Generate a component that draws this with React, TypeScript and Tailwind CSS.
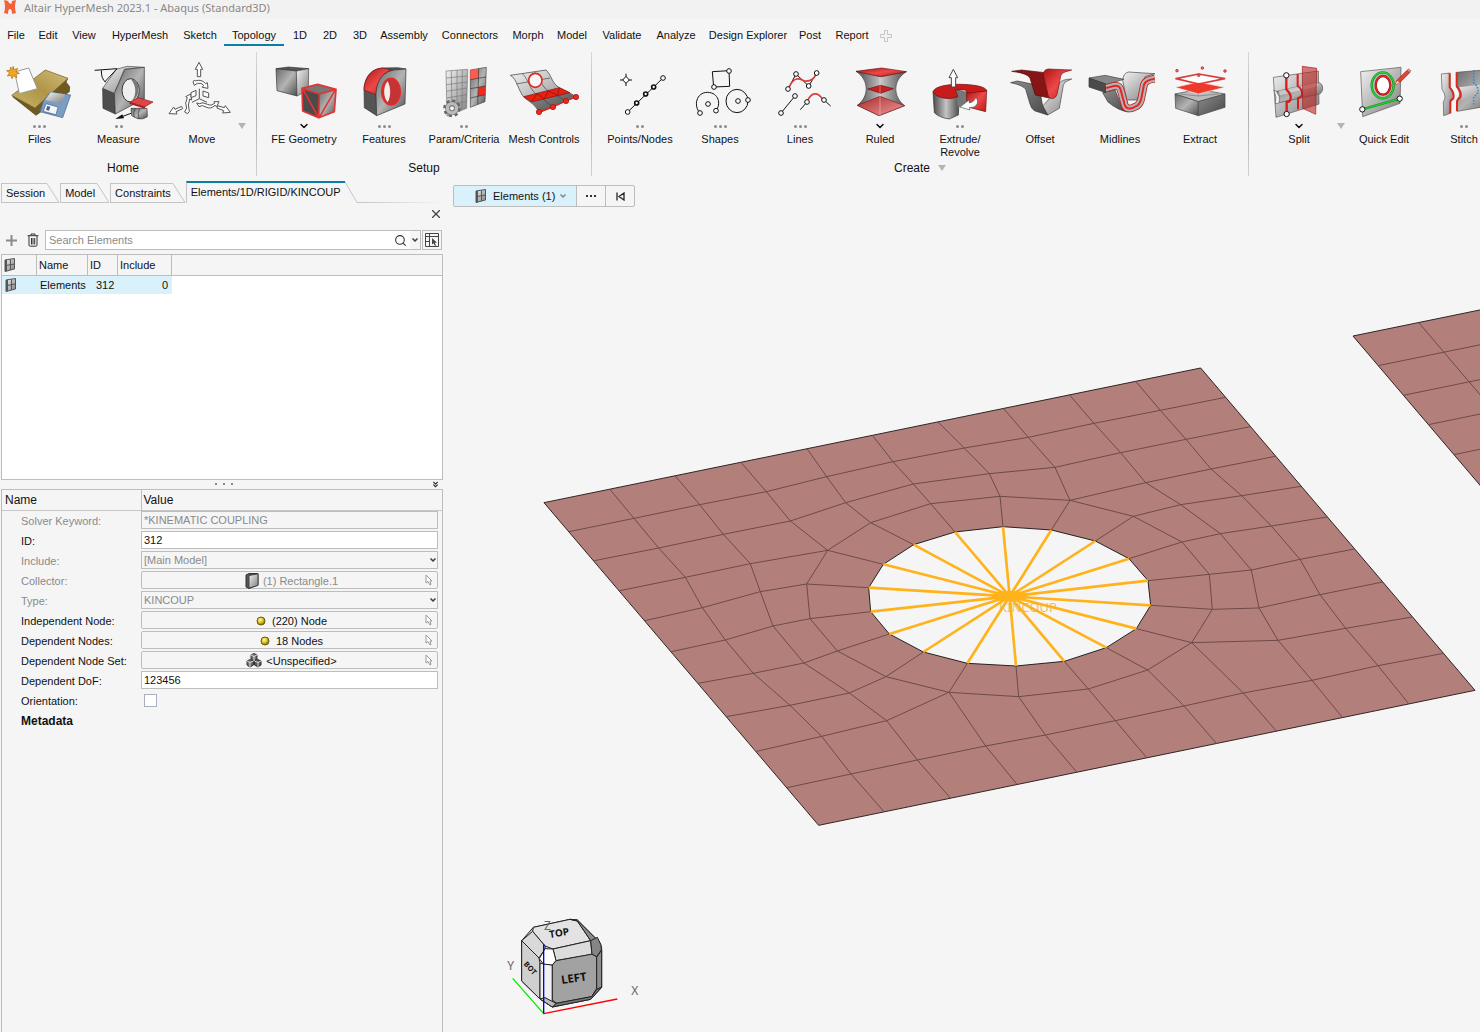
import type { ReactNode } from "react"
import clsx from "clsx"
import { ChevronDown, ChevronsDown, Search, X } from "lucide-react"

type Indicator = "none" | "two" | "three" | "chevron"

type Tool = {
  label: string
  indicator: Indicator
  viewBox: string
  icon: ReactNode
}

const menuItems = [
  { label: "File", width: "w-8" },
  { label: "Edit", width: "w-8" },
  { label: "View", width: "w-10" },
  { label: "HyperMesh", width: "w-18" },
  { label: "Sketch", width: "w-12" },
  { label: "Topology", width: "w-15" },
  { label: "1D", width: "w-8" },
  { label: "2D", width: "w-7" },
  { label: "3D", width: "w-8" },
  { label: "Assembly", width: "w-14" },
  { label: "Connectors", width: "w-19" },
  { label: "Morph", width: "w-10" },
  { label: "Model", width: "w-12" },
  { label: "Validate", width: "w-13" },
  { label: "Analyze", width: "w-14" },
  { label: "Design Explorer", width: "w-22" },
  { label: "Post", width: "w-9" },
  { label: "Report", width: "w-12" },
]

/* ---------- ribbon icons ---------- */

const nodeProps = { r: 7, fill: "#fff", stroke: "#111", strokeWidth: 3 }

function FilesIcon() {
  return (
    <g strokeLinejoin="round">
      <polygon points="133,212 201,236 196,246 207,260 206,275 106,346 36,290" fill="#6e5a22" stroke="#4d3f18" strokeWidth="2" />
      <polygon points="33,286 134,210 202,235 103,324" fill="url(#tan)" stroke="#7a6527" strokeWidth="2" />
      <polygon points="128,303 150,276 210,285 186,353 118,335" fill="#7b9cc4" stroke="#45628a" strokeWidth="2" />
      <polygon points="150,277 194,283 180,310 134,300" fill="url(#metalLight)" />
      <polygon points="136,311 172,321 166,344 128,334" fill="#f4f6fa" stroke="#45628a" strokeWidth="2" />
      <polygon points="140,318 149,320 145,332 136,330" fill="#45628a" />
      <polygon points="42,216 84,204 110,266 56,281" fill="#fff" stroke="#999" strokeWidth="3" />
      <path d="M37,199 L41,209 L51,205 L46,215 L56,220 L46,223 L49,233 L39,227 L34,236 L31,226 L20,228 L27,219 L18,212 L29,211 L29,201 L36,208Z" fill="#f5a623" stroke="#a86a00" strokeWidth="2" />
    </g>
  )
}

function MeasureIcon() {
  return (
    <g strokeLinejoin="round">
      <polygon points="307,265 342,280 345,342 308,325" fill="#4e4e4e" stroke="#333" strokeWidth="2" />
      <polygon points="307,265 348,208 380,199 432,202 372,208 342,280" fill="url(#metalLight)" stroke="#444" strokeWidth="2" />
      <polygon points="342,280 374,208 432,202 432,296 345,342" fill="url(#metal)" stroke="#333" strokeWidth="2" />
      <ellipse cx="391" cy="271" rx="26" ry="35" fill="#eee" stroke="#333" strokeWidth="3" />
      <path d="M391,237 C420,240 424,290 394,304 C410,285 408,255 391,237Z" fill="#777" />
      <path d="M283,211 L350,206 L313,246 M303,211 C303,228 306,238 316,247" fill="none" stroke="#111" strokeWidth="3" />
      <path d="M392,325 L440,325 L441,350 Q428,360 412,356 L394,347Z" fill="url(#metal)" stroke="#333" strokeWidth="2" />
      <path d="M405,325 Q396,338 402,352 M418,325 Q410,340 416,356" fill="none" stroke="#333" strokeWidth="2" />
      <polygon points="388,307 413,293 458,306 434,320" fill="#e04545" stroke="#8e1717" strokeWidth="2" />
      <polygon points="388,307 434,320 434,326 388,312" fill="#a31f1f" />
      <path d="M392,340 L362,351" stroke="#111" strokeWidth="3" />
      <polygon points="345,357 366,343 371,355" fill="#111" />
    </g>
  )
}

function MoveIcon() {
  return (
    <g fill="#fff" stroke="#555" strokeWidth="3" strokeLinejoin="round">
      <polygon points="597,187 608,208 602,208 602,230 592,230 592,208 586,208" />
      <polygon points="507,341 521,321 525,328 545,319 548,326 528,335 531,342" />
      <polygon points="691,337 676,317 673,323 653,317 651,324 671,332 668,339" />
      <path d="M579,246 L583,256 L592,250 Q605,247 611,256 L607,262 L624,265 L622,248 L617,251 Q604,236 586,243 L583,240Z" />
      <path d="M572,282 L557,290 L562,293 Q553,310 560,324 L554,336 L563,341 L568,334 Q562,315 569,297 L575,300Z" />
      <path d="M590,309 L597,320 Q607,313 618,321 Q632,329 645,316 L650,320 L657,305 L642,305 L644,310 Q632,320 622,313 Q608,305 598,311Z" />
      <polygon points="573,278 588,271 588,287 573,293" />
      <polygon points="609,273 626,279 626,293 609,288" />
      <path d="M598,266 V296 L576,307 M598,296 L621,307" fill="none" />
    </g>
  )
}

function FeGeometryIcon() {
  return (
    <g strokeLinejoin="round">
      <polygon points="825,206 862,201 923,206 886,213" fill="#555" stroke="#333" strokeWidth="2" />
      <polygon points="825,206 886,213 888,288 828,272" fill="url(#metal)" stroke="#333" strokeWidth="2" />
      <polygon points="886,213 923,206 922,270 888,288" fill="url(#metalLight)" stroke="#444" strokeWidth="2" />
      <polygon points="903,265 955,282 953,353 905,333" fill="#4b4b4b" />
      <polygon points="955,282 1005,268 1000,335 953,353" fill="url(#metal)" />
      <polygon points="903,265 950,253 1005,268 955,282" fill="#777" />
      <path d="M903,265 L950,253 L1005,268 L955,282Z M903,265 L905,333 L953,353 L1000,335 L1005,268 M955,282 L953,353 M906,268 L951,350 M1002,271 L956,350" fill="none" stroke="#e23434" strokeWidth="5" />
    </g>
  )
}

function FeaturesIcon() {
  return (
    <g strokeLinejoin="round">
      <path d="M1127,347 L1090,323 L1089,262 C1095,225 1115,205 1145,204 L1190,203 L1215,207 L1180,212 C1150,214 1127,237 1125,275Z" fill="#555" stroke="#333" strokeWidth="2" />
      <path d="M1089,270 C1091,225 1115,207 1145,204 L1172,210 C1145,217 1127,245 1125,284Z" fill="url(#red)" stroke="#7b1010" strokeWidth="2" />
      <path d="M1127,347 L1125,280 C1127,237 1150,214 1180,210 L1215,207 L1212,312Z" fill="url(#metal)" stroke="#333" strokeWidth="2" />
      <ellipse cx="1170" cy="275" rx="28" ry="40" fill="#c43434" stroke="#e42a2a" strokeWidth="5" />
      <path d="M1160,244 C1146,258 1146,292 1160,307 C1170,290 1170,262 1160,244Z" fill="#eee" />
    </g>
  )
}

function ParamIcon() {
  return (
    <g strokeLinejoin="round">
      <polygon points="1335,213 1400,208 1397,325 1338,348" fill="url(#metalLight)" stroke="#777" strokeWidth="2" />
      <path d="M1351,212 L1353,342 M1368,210 L1368,336 M1384,209 L1383,330 M1336,234 L1399,228 M1336,254 L1399,246 M1337,274 L1398,264 M1337,294 L1398,284 M1337,316 L1397,304" stroke="#777" strokeWidth="2" />
      <polygon points="1408,210 1456,202 1452,305 1408,322" fill="url(#metal)" stroke="#444" strokeWidth="2" />
      <polygon points="1408,210 1433,206 1433,235 1408,239" fill="#ff5a4d" />
      <polygon points="1432,262 1453,258 1452,284 1431,289" fill="#f02a1d" />
      <path d="M1433,206 L1430,313 M1408,239 L1455,231 M1408,266 L1454,258 M1408,294 L1453,284" stroke="#333" strokeWidth="2" />
      <circle cx="1353" cy="325" r="22" fill="none" stroke="#666" strokeWidth="9" strokeDasharray="9 8.3" />
      <circle cx="1353" cy="325" r="14" fill="none" stroke="#666" strokeWidth="13" />
      <circle cx="1353" cy="325" r="14" fill="none" stroke="#bbb" strokeWidth="10" />
      <circle cx="1353" cy="325" r="7" fill="#f5f5f5" stroke="#666" strokeWidth="2" />
    </g>
  )
}

function MeshControlsIcon() {
  return (
    <g strokeLinejoin="round">
      <path d="M28,226 L135,210 C152,225 152,250 175,263 L226,290 L115,338 C105,315 85,305 70,293 C52,275 48,235 28,226Z" fill="url(#metalLight)" stroke="#333" strokeWidth="2" />
      <path d="M92,306 L205,278 L226,290 L115,338Z" fill="url(#metalDark)" />
      <path d="M64,221 C85,240 85,270 108,284 M100,216 C120,232 120,260 142,273 M46,252 L147,234 M108,284 L156,321 M142,273 L195,303" fill="none" stroke="#444" strokeWidth="2" />
      <path d="M68,290 L175,263 L207,278 L92,306Z" fill="#e8200f" stroke="#7b1010" strokeWidth="2" />
      <path d="M92,306 L108,281 L130,297 L142,272 L170,287 L175,263" fill="none" stroke="#7b1010" strokeWidth="2" />
      <ellipse cx="103" cy="241" rx="20" ry="21" fill="#f6f6f6" stroke="#dd2a1c" strokeWidth="5" />
      <path d="M114,336 L156,321 L195,303 L225,291" fill="none" stroke="#e0251a" strokeWidth="4" />
      {[[114, 336], [156, 321], [195, 303], [225, 291]].map(([x, y]) => (
        <circle key={x} cx={x} cy={y} r="8" fill="#f0281a" stroke="#9c1010" strokeWidth="2" />
      ))}
    </g>
  )
}

function PointsIcon() {
  return (
    <g>
      <path d="M378,221 V258 M360,240 H396" stroke="#111" strokeWidth="3" />
      <polygon points="378,229 388,240 378,250 368,240" fill="#fff" stroke="#111" strokeWidth="3" />
      <path d="M383,336 L489,234" stroke="#111" strokeWidth="3" />
      <circle cx="383" cy="336" {...nodeProps} />
      <circle cx="410" cy="309" {...nodeProps} strokeWidth={5} r={6} />
      <circle cx="437" cy="282" {...nodeProps} strokeWidth={5} r={6} />
      <circle cx="461" cy="261" {...nodeProps} strokeWidth={5} r={6} />
      <circle cx="489" cy="234" {...nodeProps} />
    </g>
  )
}

function ShapesIcon() {
  return (
    <g fill="none" stroke="#111" strokeWidth="3">
      <polygon points="637,215 687,212 689,259 641,261" />
      <path d="M600,339 C580,318 588,277 623,277 C656,278 664,312 648,332" />
      <ellipse cx="711" cy="303" rx="33" ry="35" />
      <circle cx="687" cy="213" {...nodeProps} />
      <circle cx="642" cy="261" {...nodeProps} />
      <circle cx="624" cy="312" {...nodeProps} />
      <circle cx="600" cy="339" {...nodeProps} />
      <circle cx="648" cy="332" {...nodeProps} />
      <circle cx="714" cy="303" {...nodeProps} />
      <circle cx="744" cy="300" {...nodeProps} />
    </g>
  )
}

function LinesIcon() {
  return (
    <g fill="none" stroke="#111" strokeWidth="3">
      <path d="M864,267 L888,222 L926,258 L950,219" />
      <path d="M868,260 C885,225 900,238 915,243 C932,245 942,235 948,224" stroke="#e03a3a" strokeWidth="5" />
      <path d="M843,339 L885,288 M901,329 L921,306 M972,300 L992,318" />
      <path d="M923,301 C935,277 952,275 967,296" stroke="#e03a3a" strokeWidth="5" />
      <circle cx="864" cy="267" {...nodeProps} />
      <circle cx="888" cy="222" {...nodeProps} />
      <circle cx="926" cy="258" {...nodeProps} />
      <circle cx="950" cy="219" {...nodeProps} />
      <circle cx="843" cy="339" {...nodeProps} />
      <circle cx="885" cy="288" {...nodeProps} />
      <circle cx="921" cy="306" {...nodeProps} />
      <circle cx="972" cy="300" {...nodeProps} />
    </g>
  )
}

function RuledIcon() {
  return (
    <g strokeLinejoin="round">
      <path d="M1068,214 C1108,240 1108,290 1072,316 L1137,347 L1214,317 C1178,290 1178,240 1219,215 L1142,230Z" fill="url(#metalH)" stroke="#444" strokeWidth="2" />
      <polygon points="1068,214 1145,204 1219,215 1142,230" fill="url(#red)" stroke="#6b0f0f" strokeWidth="2" />
      <polygon points="1103,267 1142,256 1180,266 1142,280" fill="#c52323" stroke="#6b0f0f" strokeWidth="2" />
      <polygon points="1072,316 1140,289 1214,317 1137,347" fill="url(#redLight)" stroke="#8b1a1a" strokeWidth="2" />
      <path d="M1140,230 V347" stroke="#fff" strokeWidth="2" opacity=".5" />
    </g>
  )
}

function ExtrudeIcon() {
  return (
    <g strokeLinejoin="round">
      <path d="M1299,275 L1303,338 Q1318,353 1348,357 L1375,345 L1378,290Z" fill="url(#metalH)" stroke="#333" strokeWidth="2" />
      <polygon points="1365,268 1402,275 1400,318 1374,322" fill="#777" />
      <polygon points="1400,275 1460,272 1457,335 1400,320" fill="url(#red)" stroke="#6b0f0f" strokeWidth="2" />
      <path d="M1299,275 C1305,258 1345,252 1385,253 C1430,254 1460,262 1460,273 L1404,279 L1395,270 L1366,270 L1374,290 Q1350,300 1325,293 Q1305,288 1299,275Z" fill="#c81c1c" stroke="#6b0f0f" strokeWidth="2" />
      <path d="M1380,321 L1407,300 L1408,309 Q1422,307 1428,291 Q1440,312 1422,321 L1408,323 L1410,330Z" fill="#fff" stroke="#555" strokeWidth="2" />
      <polygon points="1360,208 1373,233 1367,233 1367,261 1354,261 1354,233 1347,233" fill="#fff" stroke="#444" strokeWidth="3" />
    </g>
  )
}

function OffsetIcon() {
  return (
    <g strokeLinejoin="round">
      <path d="M188,318 L212,292 L226,290 L238,250 Q244,238 275,237 L262,243 Q252,246 250,256 L238,325 L203,345Z" fill="url(#metalLight)" stroke="#444" strokeWidth="2" />
      <path d="M92,248 L112,243 L165,254 Q177,258 179,270 L188,318 L203,345 L163,332 Q153,325 150,312 L137,268 Q130,256 92,248Z" fill="url(#metalDark)" stroke="#333" strokeWidth="2" />
      <path d="M95,214 L125,210 L195,218 L208,294 L166,285 L150,235 Q145,220 95,214Z" fill="#871515" stroke="#4e0a0a" strokeWidth="2" />
      <path d="M190,224 Q190,209 205,207 L275,210 L258,215 Q245,217 242,228 L232,280 Q228,296 215,296 L206,292Z" fill="url(#red)" stroke="#7b1010" strokeWidth="2" />
    </g>
  )
}

function MidlinesIcon() {
  const section = "M379,264 L402,258 Q418,255 422,270 L434,314 Q438,328 455,325 L472,317 Q481,310 484,295 L492,254 Q496,240 524,236"
  return (
    <g strokeLinejoin="round">
      <path d="M368,278 L405,270 L425,320 L445,336 Q415,332 384,306Z" fill="url(#metalDark)" stroke="#333" strokeWidth="2" />
      <path d="M428,240 Q430,220 445,216 L525,221 L495,230 L472,300 L440,300Z" fill="url(#metalLight)" stroke="#444" strokeWidth="2" />
      <polygon points="327,234 375,226 432,238 378,254" fill="#888" stroke="#444" strokeWidth="2" />
      <polygon points="327,234 378,252 378,278 327,261" fill="#4b4b4b" stroke="#333" strokeWidth="2" />
      <path d={section} fill="none" stroke="#b92020" strokeWidth="23" />
      <path d={section} fill="none" stroke="#b4b4b4" strokeWidth="18" />
      <path d={section} fill="none" stroke="#ea2323" strokeWidth="6" />
    </g>
  )
}

function ExtractIcon() {
  return (
    <g strokeLinejoin="round">
      <polygon points="585,282 655,268 735,282 655,305" fill="#bbb" stroke="#444" strokeWidth="2" />
      <path d="M655,270 V288 L600,282 M655,288 L715,282" fill="none" stroke="#777" strokeWidth="2" />
      <polygon points="585,282 655,305 655,347 587,325" fill="url(#metal)" stroke="#444" strokeWidth="2" />
      <polygon points="655,305 735,282 735,322 655,347" fill="url(#metalDark)" stroke="#444" strokeWidth="2" />
      <polygon points="585,262 655,246 735,262 655,282" fill="#f0392b" stroke="#f6f6f6" strokeWidth="2" />
      <polygon points="588,236 656,222 734,236 656,252" fill="#fff" fillOpacity=".7" stroke="#d83b3b" strokeWidth="5" />
      {[[591, 212], [667, 204], [735, 213], [656, 226]].map(([x, y]) => (
        <circle key={x} cx={x} cy={y} r="4" fill="#ef6a6a" stroke="#a82222" strokeWidth="2" />
      ))}
    </g>
  )
}

function SplitIcon() {
  return (
    <g strokeLinejoin="round">
      <polygon points="880,232 1015,213 1017,312 888,352" fill="url(#metalLight)" stroke="#555" strokeWidth="2" />
      <path d="M890,274 L1012,247 Q1030,250 1028,268 Q1025,282 1014,283 L898,308Z" fill="url(#metal)" stroke="#555" strokeWidth="2" />
      <path d="M896,272 L1012,246 V258 L900,286Z" fill="#e8e8e8" opacity=".6" />
      <path d="M881,270 L890,275 Q902,290 898,308 L886,312 Q892,290 881,270Z" fill="#f5f5f5" stroke="#555" strokeWidth="2" />
      <path d="M919,228 V268 Q934,282 932,296 Q930,306 920,306 V340" fill="none" stroke="#d91c1c" strokeWidth="7" />
      <path d="M953,222 V258 Q968,268 966,284 Q964,292 954,294 V328" fill="none" stroke="#d91c1c" strokeWidth="6" />
      <polygon points="967,199 1010,205 1007,343 968,325" fill="#b22" fillOpacity=".6" stroke="#a51c1c" strokeWidth="2" />
      <circle cx="919" cy="226" {...nodeProps} r={8} />
      <circle cx="920" cy="342" {...nodeProps} r={8} />
    </g>
  )
}

function QuickEditIcon() {
  return (
    <g strokeLinejoin="round">
      <polygon points="1142,215 1263,202 1260,310 1148,350" fill="url(#metalLight)" stroke="#555" strokeWidth="2" />
      <ellipse cx="1208" cy="256" rx="33" ry="39" fill="#bbb" stroke="#118c1c" strokeWidth="7" />
      <ellipse cx="1208" cy="256" rx="33" ry="39" fill="none" stroke="#27d437" strokeWidth="4" />
      <ellipse cx="1209" cy="256" rx="22" ry="28" fill="#fff" stroke="#9e1616" strokeWidth="7" />
      <ellipse cx="1209" cy="256" rx="22" ry="28" fill="none" stroke="#e32424" strokeWidth="4" />
      <path d="M1147,328 L1259,296" stroke="#0f8c1b" strokeWidth="7" />
      <path d="M1147,328 L1259,296" stroke="#25d035" strokeWidth="4" />
      <circle cx="1147" cy="328" {...nodeProps} r={8} />
      <circle cx="1259" cy="296" {...nodeProps} r={8} />
      <polygon points="1246,254 1251,241 1281,211 1289,218 1259,248" fill="#e04636" stroke="#8b1a12" strokeWidth="2" />
      <polygon points="1246,254 1251,242 1259,248" fill="#f3d7a0" />
      <polygon points="1281,211 1286,207 1292,212 1289,218" fill="#e89a9a" stroke="#7b4a4a" strokeWidth="2" />
    </g>
  )
}

function StitchIcon() {
  return (
    <g strokeLinejoin="round">
      <path d="M1384,222 L1410,219 V262 Q1424,280 1420,298 L1411,304 V340 L1391,347 L1390,306 Q1402,290 1386,268Z" fill="url(#metalLight)" stroke="#555" strokeWidth="2" />
      <path d="M1430,217 L1570,205 V310 L1432,334 V300 Q1446,282 1430,262Z" fill="url(#metal)" stroke="#555" strokeWidth="2" />
      <path d="M1436,262 L1570,245 V285 L1442,300Z" fill="url(#metalLight)" />
      <path d="M1409,220 V262 Q1424,278 1420,295 Q1411,300 1411,306 V340" fill="none" stroke="#d92a1c" strokeWidth="6" />
      <path d="M1430,217 V258 Q1446,276 1441,292 Q1431,298 1431,306 V334" fill="none" stroke="#d92a1c" strokeWidth="6" />
      <path d="M1481,210 V248 Q1496,262 1494,276 Q1492,284 1481,290 V318" fill="none" stroke="#2f8fd6" strokeWidth="5" strokeDasharray="5 4" />
    </g>
  )
}

const setupTools: Tool[] = [
  { label: "FE Geometry", indicator: "chevron", viewBox: "789 180 240 180", icon: <FeGeometryIcon /> },
  { label: "Features", indicator: "three", viewBox: "1029 180 240 180", icon: <FeaturesIcon /> },
  { label: "Param/Criteria", indicator: "two", viewBox: "1269 180 240 180", icon: <ParamIcon /> },
  { label: "Mesh Controls", indicator: "none", viewBox: "9 180 240 180", icon: <MeshControlsIcon /> },
]

const createTools: Tool[] = [
  { label: "Points/Nodes", indicator: "two", viewBox: "300 180 240 180", icon: <PointsIcon /> },
  { label: "Shapes", indicator: "three", viewBox: "540 180 240 180", icon: <ShapesIcon /> },
  { label: "Lines", indicator: "three", viewBox: "780 180 240 180", icon: <LinesIcon /> },
  { label: "Ruled", indicator: "chevron", viewBox: "1020 180 240 180", icon: <RuledIcon /> },
  { label: "Extrude/ Revolve", indicator: "two", viewBox: "1260 180 240 180", icon: <ExtrudeIcon /> },
  { label: "Offset", indicator: "none", viewBox: "60 180 240 180", icon: <OffsetIcon /> },
  { label: "Midlines", indicator: "none", viewBox: "300 180 240 180", icon: <MidlinesIcon /> },
  { label: "Extract", indicator: "none", viewBox: "540 180 240 180", icon: <ExtractIcon /> },
]

function Gradients() {
  return (
    <svg className="absolute h-0 w-0" aria-hidden="true">
      <defs>
        <linearGradient id="metal" x1="0" y1="0" x2="1" y2="1">
          <stop offset="0" stopColor="#6a6a6a" />
          <stop offset=".5" stopColor="#b4b4b4" />
          <stop offset="1" stopColor="#4e4e4e" />
        </linearGradient>
        <linearGradient id="metalLight" x1="0" y1="0" x2="1" y2="1">
          <stop offset="0" stopColor="#f2f2f2" />
          <stop offset="1" stopColor="#7d7d7d" />
        </linearGradient>
        <linearGradient id="metalDark" x1="0" y1="0" x2="1" y2="1">
          <stop offset="0" stopColor="#8d8d8d" />
          <stop offset="1" stopColor="#474747" />
        </linearGradient>
        <linearGradient id="metalH">
          <stop offset="0" stopColor="#4a4a4a" />
          <stop offset=".5" stopColor="#c4c4c4" />
          <stop offset="1" stopColor="#4a4a4a" />
        </linearGradient>
        <linearGradient id="red" x1="0" y1="0" x2="1" y2="1">
          <stop offset="0" stopColor="#a81616" />
          <stop offset=".5" stopColor="#ee4848" />
          <stop offset="1" stopColor="#b51a1a" />
        </linearGradient>
        <linearGradient id="redLight" x1="0" y1="0" x2="1" y2="1">
          <stop offset="0" stopColor="#a92a2a" />
          <stop offset="1" stopColor="#f29b9b" />
        </linearGradient>
        <linearGradient id="tan" x1="0" y1="1" x2="1" y2="0">
          <stop offset="0" stopColor="#c9b46c" />
          <stop offset=".5" stopColor="#b09545" />
          <stop offset="1" stopColor="#d0bd7c" />
        </linearGradient>
        <radialGradient id="gold" cx=".4" cy=".35" r=".7">
          <stop offset="0" stopColor="#fffbb0" />
          <stop offset=".5" stopColor="#dcc220" />
          <stop offset="1" stopColor="#6f5e00" />
        </radialGradient>
      </defs>
    </svg>
  )
}

/* ---------- ribbon ---------- */

function IndicatorMark({ kind }: { kind: Indicator }) {
  return (
    <span className="flex h-3 shrink-0 items-center justify-center gap-[2px]">
      {kind === "chevron" && <ChevronDown className="h-3 w-3" strokeWidth={3} />}
      {(kind === "two" || kind === "three") && (
        <>
          <i className="h-[3px] w-[3px] rounded-full bg-[#8c8c8c]" />
          <i className="h-[3px] w-[3px] rounded-full bg-[#8c8c8c]" />
          {kind === "three" && <i className="h-[3px] w-[3px] rounded-full bg-[#8c8c8c]" />}
        </>
      )}
    </span>
  )
}

function ToolButton({ tool, className = "w-20" }: { tool: Tool; className?: string }) {
  return (
    <button type="button" className={clsx("flex shrink-0 flex-col items-center justify-start", className)}>
      <svg viewBox={tool.viewBox} className="h-[60px] w-20 shrink-0" aria-hidden="true">
        {tool.icon}
      </svg>
      <IndicatorMark kind={tool.indicator} />
      <span className="mt-px w-min text-center leading-[13px]">
        {tool.label === "Extrude/ Revolve" ? tool.label : <span className="whitespace-nowrap">{tool.label}</span>}
      </span>
    </button>
  )
}

function Triangle() {
  return (
    <svg viewBox="0 0 8 6" className="h-[6px] w-2 shrink-0" aria-hidden="true">
      <path d="M0,0 H8 L4,6Z" fill="#b4b4b4" />
    </svg>
  )
}

function Divider() {
  return <div className="mt-[2px] mb-[2px] w-px shrink-0 bg-linear-to-b from-[#d8d8d8] via-[#b0b0b0] to-[#d0d0d0]" />
}

function GroupTitle({ children }: { children?: ReactNode }) {
  return <div className="flex h-5 items-center justify-center gap-2 text-[12px] leading-4">{children}</div>
}

function Ribbon() {
  return (
    <div className="flex h-32 overflow-hidden">
      <section className="flex w-64 shrink-0 flex-col pt-[10px]">
        <div className="flex h-[98px]">
          <ToolButton
            className="w-[79px]"
            tool={{ label: "Files", indicator: "three", viewBox: "-2 180 240 180", icon: <FilesIcon /> }}
          />
          <ToolButton
            className="w-[79px]"
            tool={{ label: "Measure", indicator: "two", viewBox: "236 180 240 180", icon: <MeasureIcon /> }}
          />
          <ToolButton
            className="ml-2 w-[72px]"
            tool={{ label: "Move", indicator: "none", viewBox: "486 180 240 180", icon: <MoveIcon /> }}
          />
          <button type="button" aria-label="More home tools" className="flex w-2 items-start pt-[63px]">
            <Triangle />
          </button>
        </div>
        <div className="pr-2.5">
          <GroupTitle>Home</GroupTitle>
        </div>
      </section>
      <Divider />
      <section className="flex shrink-0 flex-col px-[7px] pt-[10px]">
        <div className="flex h-[98px]">
          {setupTools.map((tool) => (
            <ToolButton key={tool.label} tool={tool} />
          ))}
        </div>
        <GroupTitle>Setup</GroupTitle>
      </section>
      <Divider />
      <section className="flex shrink-0 flex-col px-2 pt-[10px]">
        <div className="flex h-[98px]">
          {createTools.map((tool) => (
            <ToolButton key={tool.label} tool={tool} />
          ))}
        </div>
        <GroupTitle>
          Create <Triangle />
        </GroupTitle>
      </section>
      <Divider />
      <section className="flex shrink-0 pt-[10px] pl-3">
        <ToolButton
          className="w-[76px]"
          tool={{ label: "Split", indicator: "chevron", viewBox: "837 180 240 180", icon: <SplitIcon /> }}
        />
        <button type="button" aria-label="More split tools" className="flex w-[7px] items-start pt-[63px]">
          <Triangle />
        </button>
        <ToolButton tool={{ label: "Quick Edit", indicator: "none", viewBox: "1092 180 240 180", icon: <QuickEditIcon /> }} />
        <ToolButton tool={{ label: "Stitch", indicator: "two", viewBox: "1332 180 240 180", icon: <StitchIcon /> }} />
      </section>
    </div>
  )
}

/* ---------- left panel ---------- */

function ElementsIcon() {
  return (
    <svg viewBox="0 0 12 14" className="h-[14px] w-3 shrink-0" aria-hidden="true">
      <path d="M1,2 L10.5,0.5 V11 L1,13.5Z" fill="url(#metalLight)" stroke="#555" />
      <path d="M1,2 L3,1.7 V13 L1,13.5Z" fill="#555" />
      <path d="M6.5,1.5 V12 M2,7.5 L10.5,6" stroke="#555" fill="none" />
    </svg>
  )
}

function PickCursor() {
  return (
    <svg viewBox="0 0 8 12" className="mr-1 h-3 w-2 shrink-0" aria-hidden="true">
      <path d="M1,1 V9 L3,7.5 L5,11 L6,10.5 L5,7 L7,7Z" fill="#fff" stroke="#999" />
    </svg>
  )
}

function TrashIcon() {
  return (
    <svg viewBox="0 0 12 14" className="h-[14px] w-3" aria-hidden="true">
      <path d="M4,2.5 V1 H8 V2.5 M0.5,2.7 H11.5 M2,3 V12 Q2,13.2 3.2,13.2 H8.8 Q10,13.2 10,12 V3 M4.5,5 V11.5 M6,5 V11.5 M7.7,5 V11.5" fill="none" stroke="#333" />
    </svg>
  )
}

function PanelTab({ label, active }: { label: string; active?: boolean }) {
  if (active) {
    return (
      <div className="flex h-[22px]">
        <button type="button" className="h-[22px] border-t-2 border-l border-t-[#0a7ea4] border-l-[#c4c4c4] pr-1 pb-[2px] pl-1">
          {label}
        </button>
        <svg viewBox="0 0 12 22" className="h-[22px] w-3" aria-hidden="true">
          <path d="M0,1 L12,21.5" fill="none" stroke="#c4c4c4" />
        </svg>
      </div>
    )
  }
  return (
    <div className="mr-px flex h-5">
      <button type="button" className="h-5 border-t border-b border-l border-[#c4c4c4] pr-[2px] pl-1">
        {label}
      </button>
      <svg viewBox="0 0 12 20" className="h-5 w-3" aria-hidden="true">
        <path d="M0,0.5 L12,19.5 H0" fill="none" stroke="#c4c4c4" />
      </svg>
    </div>
  )
}

function EntityBrowser() {
  const headCell = "border-r border-[#bdbdbd] p-0 pl-[2px] text-left font-normal"
  return (
    <div className="ml-px h-[226px] border border-[#bdbdbd] bg-white">
      <table className="w-full table-fixed border-separate border-spacing-0">
        <thead>
          <tr className="h-[21px] bg-[#f5f5f5]">
            <th className={clsx(headCell, "w-[35px] border-b")}>
              <ElementsIcon />
            </th>
            <th className={clsx(headCell, "w-[51px] border-b")}>Name</th>
            <th className={clsx(headCell, "w-[30px] border-b")}>ID</th>
            <th className={clsx(headCell, "w-[54px] border-b")}>Include</th>
            <th className="border-b border-[#bdbdbd] p-0" />
          </tr>
        </thead>
        <tbody>
          <tr className="h-[18px]">
            <td className="bg-[#d9f1fb] p-0 pl-[3px]">
              <ElementsIcon />
            </td>
            <td className="bg-[#d9f1fb] p-0 pl-[3px]">Elements</td>
            <td className="bg-[#d9f1fb] p-0 pl-2">312</td>
            <td className="bg-[#d9f1fb] p-0 pr-1 text-right">0</td>
            <td />
          </tr>
        </tbody>
      </table>
    </div>
  )
}

type Property = {
  label: string
  id: string
  kind: "text" | "select" | "picker" | "checkbox"
  value?: string
  icon?: ReactNode
  disabled?: boolean
}

const nodeIcon = (
  <svg viewBox="0 0 10 10" className="mr-[6px] h-[10px] w-[10px]" aria-hidden="true">
    <circle cx="5" cy="5" r="4" fill="url(#gold)" stroke="#6b5c10" />
  </svg>
)

const collectorIcon = (
  <svg viewBox="0 0 14 16" className="mr-1 h-4 w-[14px]" aria-hidden="true">
    <path d="M1,2 L4,0.5 H13 V12 L4,15.5 L1,14Z" fill="#555" stroke="#333" />
    <path d="M4,2.5 L13,0.8 V12.5 L4,15Z" fill="url(#metalLight)" stroke="#444" />
  </svg>
)

const setIcon = (
  <svg viewBox="0 0 16 15" className="mr-1 h-[15px] w-4" aria-hidden="true">
    <path d="M5,2 L8,0.5 L11,2 V6 L8,8 L5,6Z M1,8 L4,6.5 L7.5,8 V12 L4,14 L1,12Z M8.5,8 L12,6.5 L15,8 V12 L12,14 L8.5,12Z" fill="url(#metalDark)" stroke="#333" />
    <path d="M5,2 L8,3.5 L11,2 M8,3.5 V8 M1,8 L4,9.5 L7.5,8 M4,9.5 V14 M8.5,8 L12,9.5 L15,8 M12,9.5 V14" fill="none" stroke="#ddd" />
  </svg>
)

const properties: Property[] = [
  { label: "Solver Keyword:", id: "keyword", kind: "text", value: "*KINEMATIC COUPLING", disabled: true },
  { label: "ID:", id: "id", kind: "text", value: "312" },
  { label: "Include:", id: "include", kind: "select", value: "[Main Model]", disabled: true },
  { label: "Collector:", id: "collector", kind: "picker", value: "(1) Rectangle.1", icon: collectorIcon, disabled: true },
  { label: "Type:", id: "type", kind: "select", value: "KINCOUP", disabled: true },
  { label: "Independent Node:", id: "independent", kind: "picker", value: "(220) Node", icon: nodeIcon },
  { label: "Dependent Nodes:", id: "dependent", kind: "picker", value: "18 Nodes", icon: nodeIcon },
  { label: "Dependent Node Set:", id: "node-set", kind: "picker", value: "<Unspecified>", icon: setIcon },
  { label: "Dependent DoF:", id: "dof", kind: "text", value: "123456" },
  { label: "Orientation:", id: "orientation", kind: "checkbox" },
]

function PropertyField({ property }: { property: Property }) {
  const { id, kind, value, icon, disabled } = property
  if (kind === "checkbox") {
    return (
      <input id={id} type="checkbox" className="ml-[3px] block h-[13px] w-[13px] appearance-none border border-[#a9b0bf] bg-white" />
    )
  }
  if (kind === "select") {
    return (
      <div className="relative">
        <select
          id={id}
          disabled={disabled}
          className="block h-[18px] w-full appearance-none border border-[#bdbdbd] bg-[#f5f5f5] px-[2px] text-[#8a8a8a] opacity-100"
        >
          <option>{value}</option>
        </select>
        <ChevronDown className="pointer-events-none absolute top-[5px] right-[1px] h-2 w-2 text-[#444]" strokeWidth={5} />
      </div>
    )
  }
  if (kind === "picker") {
    return (
      <button
        id={id}
        type="button"
        className="flex h-[18px] w-full items-center rounded-[2px] border border-[#bdbdbd] bg-[#f5f5f5]"
      >
        <span className="flex flex-1 items-center justify-center pt-px pl-4">
          {icon}
          {value}
        </span>
        <PickCursor />
      </button>
    )
  }
  return (
    <input
      id={id}
      type="text"
      defaultValue={value}
      disabled={disabled}
      className={clsx("block h-[18px] w-full border border-[#bdbdbd] px-[2px]", disabled ? "bg-[#f5f5f5] text-[#8a8a8a]" : "bg-white")}
    />
  )
}

function EntityEditor() {
  return (
    <div className="ml-px flex-1 border border-b-0 border-[#bdbdbd]">
      <table className="w-full table-fixed border-collapse">
        <thead className="text-[12px]">
          <tr className="h-5 border-b border-[#c8c8c8]">
            <th className="w-[139px] border-r border-[#bdbdbd] p-0 pl-[3px] text-left font-normal">Name</th>
            <th className="p-0 pl-[2px] text-left font-normal">Value</th>
          </tr>
        </thead>
        <tbody>
          {properties.map((property) => (
            <tr key={property.id} className={clsx("h-5", property.disabled && "text-[#8a8a8a]")}>
              <td className="p-0 pt-px pl-[19px]">
                <label htmlFor={property.id}>{property.label}</label>
              </td>
              <td className="p-0 pr-1">
                <PropertyField property={property} />
              </td>
            </tr>
          ))}
          <tr className="h-5 text-[12px] font-bold">
            <td className="p-0 pt-px pl-[19px]" colSpan={2}>
              Metadata
            </td>
          </tr>
        </tbody>
      </table>
    </div>
  )
}

function SidePanel() {
  return (
    <aside className="flex w-[443px] shrink-0 flex-col">
      <div className="flex items-end pt-[3px] pl-px">
        <PanelTab label="Session" />
        <PanelTab label="Model" />
        <PanelTab label="Constraints" />
        <PanelTab label="Elements/1D/RIGID/KINCOUP" active />
        <div className="h-px flex-1 bg-linear-to-r from-[#c4c4c4] to-[#f5f5f5]" />
      </div>
      <div className="flex h-[27px] items-start justify-end pt-1">
        <button type="button" aria-label="Close panel">
          <X className="h-[14px] w-[14px] text-[#444]" strokeWidth={2} />
        </button>
      </div>
      <div className="flex h-5 items-center">
        <button type="button" aria-label="Add" className="ml-[6px]">
          <svg viewBox="0 0 11 11" className="h-[11px] w-[11px]" aria-hidden="true">
            <path d="M5.5,0 V11 M0,5.5 H11" stroke="#8a8a8a" strokeWidth="2" />
          </svg>
        </button>
        <button type="button" aria-label="Delete" className="ml-[10px]">
          <TrashIcon />
        </button>
        <div className="ml-[6px] flex h-5 flex-1 items-center border border-[#bdbdbd] bg-white">
          <input
            type="search"
            aria-label="Search Elements"
            placeholder="Search Elements"
            className="h-[18px] min-w-0 flex-1 bg-transparent px-[3px] placeholder:text-[#8a8a8a] focus:outline-none"
          />
          <Search className="mr-[3px] h-[13px] w-[13px] text-[#333]" strokeWidth={2} />
          <button type="button" aria-label="Search options" className="flex h-full w-[10px] items-center justify-center bg-[#f5f5f5]">
            <ChevronDown className="h-2 w-2 text-[#444]" strokeWidth={5} />
          </button>
        </div>
        <button
          type="button"
          aria-label="Pick from graphics"
          className="mr-px ml-px flex h-5 w-5 items-center justify-center border border-[#bdbdbd]"
        >
          <svg viewBox="0 0 14 14" className="h-[14px] w-[14px]" aria-hidden="true">
            <path d="M0.5,0.5 H13.5 V13.5 H0.5Z M0.5,3.5 H13.5 M4.5,0.5 V13.5 M0.5,8.5 H4.5" fill="none" stroke="#444" />
            <path d="M7,5 V11.5 L8.5,10.2 L10,13 L11,12.4 L9.8,9.8 L12,9.8Z" fill="#444" />
          </svg>
        </button>
      </div>
      <div className="h-1" />
      <EntityBrowser />
      <div className="flex h-[9px] items-center">
        <div className="flex flex-1 justify-center gap-[6px] pb-[2px] pl-4">
          <i className="h-[2px] w-[2px] bg-[#888]" />
          <i className="h-[2px] w-[2px] bg-[#888]" />
          <i className="h-[2px] w-[2px] bg-[#888]" />
        </div>
        <button type="button" aria-label="Collapse" className="mr-[3px]">
          <ChevronsDown className="h-[9px] w-[9px] text-[#333]" strokeWidth={3} />
        </button>
      </div>
      <EntityEditor />
    </aside>
  )
}

/* ---------- graphics viewport ---------- */

const holeNodes = [
  [1389, 530], [1534, 540], [1666, 573], [1767, 626], [1824, 692], [1832, 766],
  [1789, 836], [1699, 893], [1573, 934], [1428, 948], [1282, 940], [1150, 906],
  [1048, 852], [992, 785], [986, 713], [1030, 643], [1121, 584], [1245, 546],
]

const ringNodes = [
  [1380, 439], [1590, 451], [1780, 499], [1926, 576], [2008, 673], [2017, 778],
  [1955, 878], [1823, 960], [1645, 1017], [1436, 1040], [1227, 1027], [1038, 980],
  [892, 903], [810, 806], [800, 702], [863, 601], [992, 518], [1172, 461],
]

const meshLines = [
  // rows
  "87,545 282,505 479,464 679,425 860,380 1059,335 1273,294 1465,262 1662,220 1861,181 2057,142",
  "163,632 356,594 550,553 751,513 917,458 1120,402 1348,371 1545,352 1742,308 1938,268 2131,230",
  "239,722 436,682 631,641 863,601",
  "1590,451 1817,398 2013,357 2206,319",
  "315,812 487,773 661,725 800,702",
  "1780,499 1922,464 2105,437 2284,409",
  "394,905 556,870 699,828 810,806",
  "1926,576 2041,551 2194,528 2362,501",
  "474,1000 640,970 792,939 892,903",
  "2008,673 2134,660 2280,628 2444,597",
  "559,1100 750,1066 928,1029 1038,980",
  "2017,778 2157,774 2340,734 2529,696",
  "650,1204 845,1159 1040,1112 1227,1027",
  "1955,878 2214,871 2417,835 2617,801",
  "741,1313 933,1272 1132,1230 1337,1188 1516,1155 1726,1112 1932,1068 2110,1029 2316,991 2514,947 2711,910",
  // columns
  "209,417 282,505 356,594 436,682 487,773 556,870 640,970 750,1066 845,1159 933,1272 1032,1385",
  "405,377 479,464 550,553 631,641 661,725 699,828 792,939 928,1029 1040,1112 1132,1230 1231,1344",
  "603,337 679,425 751,513 863,601",
  "1227,1027 1337,1188 1431,1303",
  "801,296 860,380 917,458 992,518",
  "1436,1040 1516,1155 1610,1266",
  "997,256 1059,335 1120,402 1172,461",
  "1645,1017 1726,1112 1820,1223",
  "1194,216 1273,294 1348,371 1380,439",
  "1823,960 1932,1068 2030,1181",
  "1391,176 1465,262 1545,352 1590,451",
  "1955,878 2110,1029 2209,1143",
  "1588,134 1662,220 1742,308 1817,398 1922,464 2041,551 2134,660 2157,774 2214,871 2316,991 2408,1103",
  "1787,94 1861,181 1938,268 2013,357 2105,437 2194,528 2280,628 2340,734 2417,835 2514,947 2606,1061",
]

const rowSteps = [0.092, 0.184, 0.275, 0.368, 0.464, 0.561, 0.665, 0.775, 0.886]
const columnSteps = [0.1, 0.2, 0.3, 0.4, 0.5, 0.6, 0.7, 0.8, 0.9]

const toPoints = (nodes: number[][]) => nodes.map((n) => n.join(",")).join(" ")

function Mesh() {
  return (
    <svg className="absolute inset-0 h-full w-full" aria-label="Mesh of Rectangle.1 with kinematic coupling">
      <g transform="translate(97 172) scale(0.33333)" fill="none" strokeWidth="3">
        <polygon points="2439,-42 4409,-446 5232,521 3262,925" fill="#b37f7b" stroke="#2e2424" />
        <g stroke="#6d4a48">
          {rowSteps.map((t) => (
            <path key={t} d={`M${2439 + 823 * t},${-42 + 967 * t} l1970,-404`} />
          ))}
          {columnSteps.map((t) => (
            <path key={t} d={`M${2439 + 1970 * t},${-42 - 404 * t} l823,967`} />
          ))}
        </g>
        <polygon points="12,458 1982,54 2805,1021 836,1426" fill="#b37f7b" stroke="#2e2424" />
        <g stroke="#6d4a48">
          {meshLines.map((points) => (
            <polyline key={points} points={points} />
          ))}
          <polygon points={toPoints(ringNodes)} />
          {holeNodes.map(([x, y], i) => (
            <line key={i} x1={x} y1={y} x2={ringNodes[i][0]} y2={ringNodes[i][1]} />
          ))}
        </g>
        <polygon points={toPoints(holeNodes)} fill="#f5f5f5" stroke="#222" />
        <g stroke="#ffb21a" strokeWidth="8">
          {holeNodes.map(([x, y], i) => (
            <line key={i} x1="1409" y1="739" x2={x} y2={y} />
          ))}
        </g>
        <ellipse cx="1409" cy="739" rx="54" ry="16" fill="#ffb21a" />
      </g>
      <text x="556" y="434" fontSize="13" fill="#f3ae3c" opacity=".8" className="font-['Noto_Sans',sans-serif]">
        KINCOUP
      </text>
    </svg>
  )
}

function ViewCube() {
  return (
    <svg viewBox="0 0 510 396" className="absolute bottom-0 left-[47px] h-[132px] w-[170px]" aria-label="View cube">
      <g stroke="#222" strokeWidth="3" strokeLinejoin="round">
        <polygon points="95,122 130,82 240,58 262,60 330,128 335,145 335,262 302,298 187,321 150,297 95,243" fill="#d6d6d6" />
        <polygon points="130,82 240,58 262,63 302,122 189,147 165,138 128,94" fill="#e3e3e3" />
        <polygon points="240,58 262,60 330,128 320,136 302,122 262,63" fill="#8a8a8a" />
        <polygon points="95,122 128,94 165,138 165,147 147,174" fill="#d9d9d9" />
        <polygon points="95,122 147,174 150,190 150,297 95,243" fill="#d0d0d0" />
        <polygon points="189,147 302,122 306,163 198,182" fill="#dcdcdc" />
        <polygon points="150,190 187,195 187,321 150,297" fill="#f0f0f0" />
        <polygon points="165,146 189,147 198,182 187,195 160,192 148,176" fill="#fff" />
        <polygon points="187,195 198,182 308,162 320,172 320,265 305,290 200,310 187,300" fill="#a2a2a2" />
        <polygon points="320,172 335,150 335,262 320,268" fill="#8e8e8e" />
        <polygon points="302,122 322,112 333,135 334,150 320,170 306,163" fill="#858585" />
        <polygon points="198,310 305,290 320,268 335,262 302,298 187,321" fill="#777" />
        <polygon points="150,297 165,293 198,310 187,321" fill="#bbb" />
      </g>
      <g className="font-['Open_Sans',sans-serif] font-bold" fill="#111">
        <text x="179" y="114" fontSize="30" transform="rotate(-9 179 114)">TOP</text>
        <text x="215" y="252" fontSize="34" transform="rotate(-8 215 252)">LEFT</text>
        <text x="100" y="193" fontSize="22" transform="rotate(48 100 193)">BOT</text>
      </g>
      <g strokeWidth="4" fill="none">
        <path d="M161,341 L382,297" stroke="#f00" />
        <path d="M161,341 L68,235" stroke="#0e0" />
        <path d="M161,341 V133" stroke="#00d" />
      </g>
      <g className="font-['Noto_Sans',sans-serif]" fill="#666" fontSize="36" textAnchor="middle">
        <text x="172" y="89">Z</text>
        <text x="62" y="209">Y</text>
        <text x="434" y="284">X</text>
      </g>
    </svg>
  )
}

function Viewport() {
  return (
    <main className="relative min-w-0 flex-1 overflow-hidden pt-[7px] pl-[10px]">
      <Mesh />
      <ViewCube />
      <div className="relative inline-flex h-[22px] rounded-[2px] border border-[#bdbdbd] bg-[#f5f5f5]">
        <button type="button" className="flex w-[122px] items-center gap-[6px] bg-[#d9f1fb] pl-[21px]">
          <ElementsIcon />
          Elements (1)
          <ChevronDown className="-ml-[2px] h-2 w-2 text-[#888]" strokeWidth={5} />
        </button>
        <button type="button" aria-label="More" className="flex w-[29px] items-center justify-center gap-[2px] border-l border-[#bdbdbd]">
          <i className="h-[2px] w-[2px] bg-[#333]" />
          <i className="h-[2px] w-[2px] bg-[#333]" />
          <i className="h-[2px] w-[2px] bg-[#333]" />
        </button>
        <button type="button" aria-label="Reset" className="flex w-[29px] items-center justify-center border-l border-[#bdbdbd]">
          <svg viewBox="0 0 9 9" className="h-[9px] w-[9px]" aria-hidden="true">
            <path d="M1,0.5 V8.5 M8,1 L3,4.5 L8,8Z" fill="none" stroke="#222" strokeWidth="1.3" />
          </svg>
        </button>
      </div>
    </main>
  )
}

export default function App() {
  return (
    <div className="flex min-h-screen flex-col overflow-hidden bg-[#f5f5f5] font-['Liberation_Sans',sans-serif] text-[11px] leading-4 text-[#111]">
      <Gradients />

      {/* Title bar */}
      <header className="flex h-[19px] items-start bg-[#f2f2f2] pl-1 font-['Noto_Sans',sans-serif] text-[#888]">
        <svg viewBox="0 0 12 14" className="h-[14px] w-3" aria-hidden="true">
          <path d="M0,0 L4,1 Q5,4 7,4 Q8,3 8,1 L12,0 Q10,7 12,13 L8,14 Q8,9 6,9 Q4,9 4,14 L0,13 Q2,7 0,0Z" fill="#f4623a" />
        </svg>
        <h1 className="ml-2">Altair HyperMesh 2023.1 - Abaqus (Standard3D)</h1>
      </header>

      {/* Menu bar */}
      <nav className="flex h-[31px] items-start pt-2">
        {menuItems.map(({ label, width }) => (
          <a
            key={label}
            href="#"
            className={clsx(
              "shrink-0 border-b-2 pb-px text-center whitespace-nowrap",
              width,
              label === "Topology" ? "border-[#0a7ea4]" : "border-transparent"
            )}
          >
            {label}
          </a>
        ))}
        <button type="button" aria-label="Add ribbon" className="mt-[3px] ml-1">
          <svg viewBox="0 0 12 12" className="h-3 w-3" aria-hidden="true">
            <path d="M4.5,0.5 H7.5 V4.5 H11.5 V7.5 H7.5 V11.5 H4.5 V7.5 H0.5 V4.5 H4.5Z" fill="#f5f5f5" stroke="#c4c4c4" />
          </svg>
        </button>
      </nav>

      <Ribbon />

      <div className="flex flex-1">
        <SidePanel />
        <Viewport />
      </div>
    </div>
  )
}
